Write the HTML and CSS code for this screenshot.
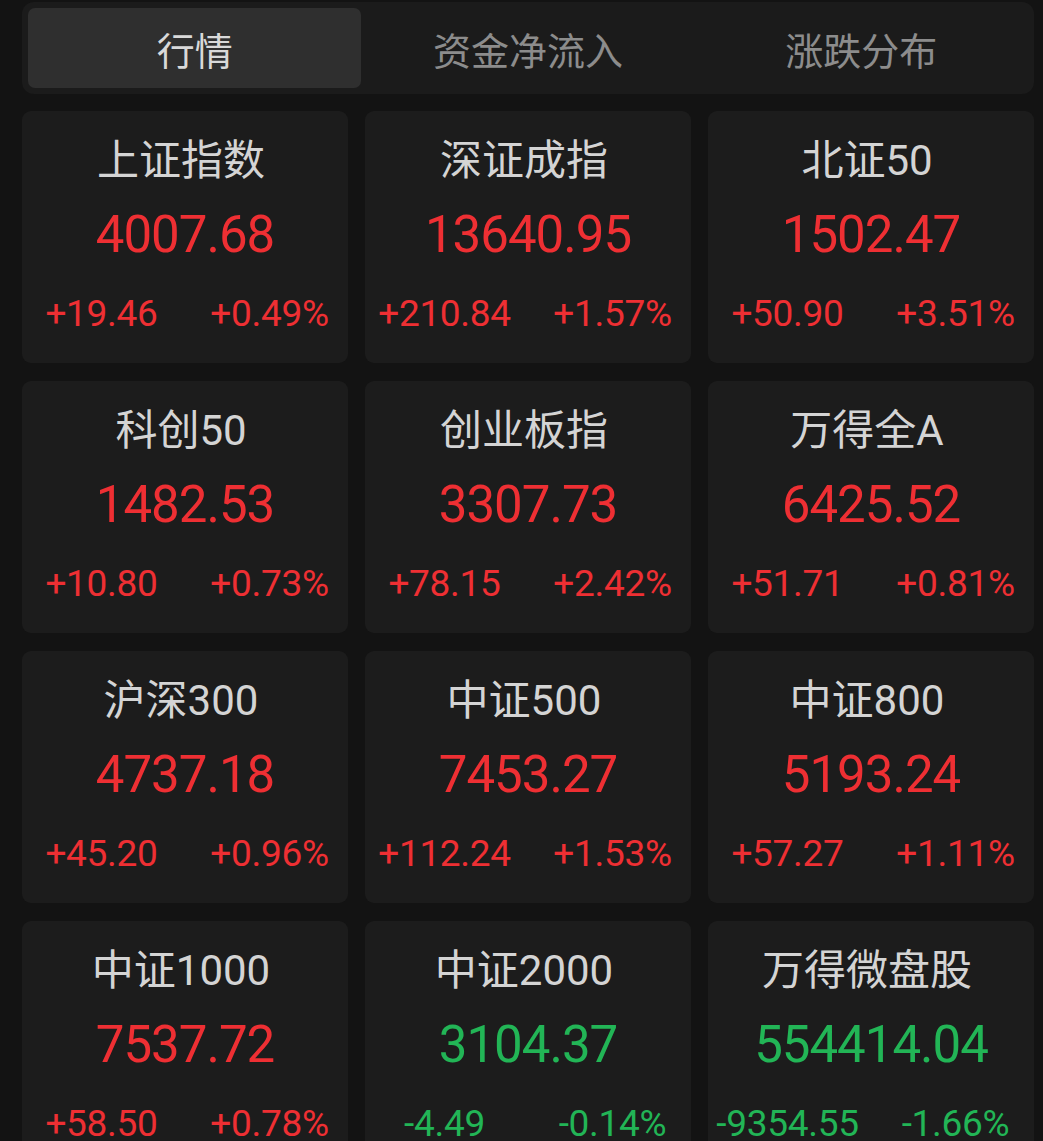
FILE: index.html
```html
<!DOCTYPE html>
<html lang="zh-CN">
<head>
<meta charset="utf-8">
<title>行情</title>
<link rel="stylesheet" href="styles.css">
</head>
<body>
<div class="page">
  <div class="tabs">
    <div class="tab active">行情</div>
    <div class="tab">资金净流入</div>
    <div class="tab">涨跌分布</div>
  </div>
  <div class="grid">
    <div class="card up"><div class="title">上证指数</div><div class="price">4007.68</div><div class="chg"><span class="c1">+19.46</span><span class="c2">+0.49%</span></div></div>
    <div class="card up"><div class="title">深证成指</div><div class="price">13640.95</div><div class="chg"><span class="c1">+210.84</span><span class="c2">+1.57%</span></div></div>
    <div class="card up"><div class="title">北证50</div><div class="price">1502.47</div><div class="chg"><span class="c1">+50.90</span><span class="c2">+3.51%</span></div></div>
    <div class="card up"><div class="title">科创50</div><div class="price">1482.53</div><div class="chg"><span class="c1">+10.80</span><span class="c2">+0.73%</span></div></div>
    <div class="card up"><div class="title">创业板指</div><div class="price">3307.73</div><div class="chg"><span class="c1">+78.15</span><span class="c2">+2.42%</span></div></div>
    <div class="card up"><div class="title">万得全A</div><div class="price">6425.52</div><div class="chg"><span class="c1">+51.71</span><span class="c2">+0.81%</span></div></div>
    <div class="card up"><div class="title">沪深300</div><div class="price">4737.18</div><div class="chg"><span class="c1">+45.20</span><span class="c2">+0.96%</span></div></div>
    <div class="card up"><div class="title">中证500</div><div class="price">7453.27</div><div class="chg"><span class="c1">+112.24</span><span class="c2">+1.53%</span></div></div>
    <div class="card up"><div class="title">中证800</div><div class="price">5193.24</div><div class="chg"><span class="c1">+57.27</span><span class="c2">+1.11%</span></div></div>
    <div class="card up"><div class="title">中证1000</div><div class="price">7537.72</div><div class="chg"><span class="c1">+58.50</span><span class="c2">+0.78%</span></div></div>
    <div class="card down"><div class="title">中证2000</div><div class="price">3104.37</div><div class="chg"><span class="c1">-4.49</span><span class="c2">-0.14%</span></div></div>
    <div class="card down"><div class="title">万得微盘股</div><div class="price">554414.04</div><div class="chg"><span class="c1">-9354.55</span><span class="c2">-1.66%</span></div></div>
  </div>
</div>
</body>
</html>
```

FILE: styles.css
```css
html, body {
  margin: 0;
  padding: 0;
  background: #131313;
}
body {
  font-family: Roboto, "Noto Sans CJK SC", sans-serif;
  overflow: hidden;
}
.page {
  width: 1012px;
  padding: 2px 9px 0 22px;
}
.tabs {
  display: grid;
  grid-template-columns: repeat(3, 1fr);
  padding: 6px;
  height: 80px;
  background: #1b1b1b;
  border-radius: 12px;
  margin-bottom: 17px;
  box-sizing: content-box;
}
.tab {
  display: flex;
  align-items: center;
  justify-content: center;
  font-size: 38px;
  color: #8c8c8c;
  border-radius: 7px;
  font-family: "Noto Sans CJK SC", sans-serif;
}
.tab.active {
  background: #2f2f2f;
  color: #d9d9d9;
}
.grid {
  display: grid;
  grid-template-columns: repeat(3, 326px);
  grid-auto-rows: 252px;
  column-gap: 17px;
  row-gap: 18px;
}
.card {
  background: #1c1c1c;
  border-radius: 9px;
  display: flex;
  flex-direction: column;
  align-items: stretch;
  padding-top: 25px;
  box-sizing: border-box;
}
.title {
  font-size: 42px;
  line-height: 50px;
  height: 50px;
  color: #d4d4d4;
  text-align: center;
  padding-right: 8px;
}
.price {
  font-size: 51px;
  line-height: 60px;
  margin-top: 19px;
  text-align: center;
  letter-spacing: -1px;
}
.chg {
  display: grid;
  grid-template-columns: 1fr 1fr;
  font-size: 37px;
  line-height: 44px;
  margin-top: 27px;
  letter-spacing: -0.3px;
}
.c1 {
  text-align: center;
  padding-right: 4px;
}
.c2 {
  text-align: center;
  padding-left: 6px;
}
.up .price, .up .chg {
  color: #ee2f33;
}
.down .price, .down .chg {
  color: #22b556;
}
```
